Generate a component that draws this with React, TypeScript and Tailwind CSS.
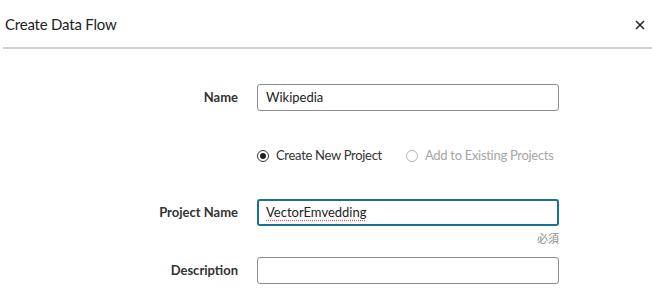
import React from 'react';

/* ---------------------------------- Row ---------------------------------- */

const Row: React.FC<{ label?: string; className?: string; children: React.ReactNode }> = ({
  label,
  className = '',
  children,
}) => (
  <div className={`flex items-center ${className}`}>
    <div className="w-[238px] shrink-0 text-right text-[13px] font-bold text-[#333]">{label}</div>
    <div className="ml-[19px] w-[302px]">{children}</div>
  </div>
);

/* --------------------------------- Radio --------------------------------- */

const Radio: React.FC<{ checked?: boolean; disabled?: boolean; label: string }> = ({
  checked,
  disabled,
  label,
}) => (
  <label
    className={`flex shrink-0 items-center gap-[7px] whitespace-nowrap text-[13px] tracking-[-0.3px] ${
      disabled ? 'text-[#a6a6a6]' : 'text-[#333]'
    }`}
  >
    <span
      className={`flex h-[12px] w-[12px] items-center justify-center rounded-full border ${
        disabled ? 'border-[#b5b5b5]' : 'border-[#333]'
      }`}
    >
      {checked && <span className="h-[6px] w-[6px] rounded-full bg-[#222]" />}
    </span>
    {label}
  </label>
);

/* ---------------------------------- App ---------------------------------- */

export default function App() {
  return (
    <div className="h-[300px] w-[652px] overflow-hidden bg-white font-['Lato','Noto_Sans',sans-serif] text-[#222]">
      {/* Header */}
      <div className="flex h-[47px] items-center justify-between pl-[5px] pr-[6px] pt-[2px]">
        <h1 className="text-[15px] tracking-[-0.2px] text-[#222]">Create Data Flow</h1>
        <svg width="10" height="10" viewBox="0 0 10 10" className="mr-[1px]">
          <path d="M1 1L9 9M9 1L1 9" stroke="#222" strokeWidth="1.5" />
        </svg>
      </div>
      <div className="ml-[3px] h-[2px] bg-[#d2d2d2]" />

      {/* Form */}
      <Row label="Name" className="mt-[35px]">
        <div className="flex h-[27px] items-center rounded-[3px] border border-[#8c8c8c] px-[8px] text-[13px]">
          Wikipedia
        </div>
      </Row>

      <Row className="mt-[35px]">
        <div className="flex h-[20px] items-center gap-[24px]">
          <Radio checked label="Create New Project" />
          <Radio disabled label="Add to Existing Projects" />
        </div>
      </Row>

      <Row label="Project Name" className="mt-[33px]">
        <div className="flex h-[27px] items-center rounded-[3px] border-2 border-[#19728f] px-[7px] text-[13px]">
          <span className="underline decoration-[#e05a5a] decoration-dotted underline-offset-[3px]">
            VectorEmvedding
          </span>
        </div>
      </Row>

      <Row className="mt-[4px]">
        <div className="text-right text-[11px] leading-[16px] text-[#8a8a8a] font-['Noto_Sans_CJK_JP',sans-serif]">
          必須
        </div>
      </Row>

      <Row label="Description" className="mt-[11px]">
        <div className="h-[27px] rounded-[3px] border border-[#8c8c8c]" />
      </Row>
    </div>
  );
}
